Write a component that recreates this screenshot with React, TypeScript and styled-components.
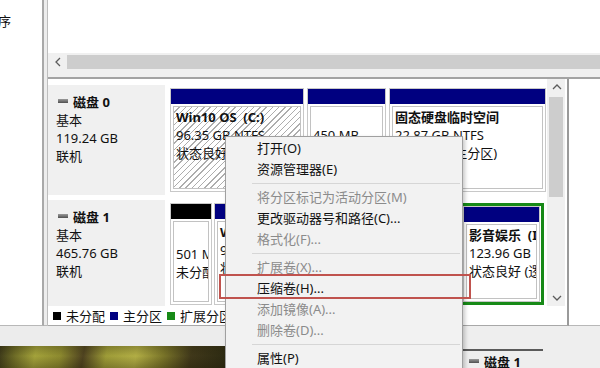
import React from 'react'
import styled, { createGlobalStyle } from 'styled-components'

const FONT = `'Noto Sans', 'Noto Sans CJK SC', sans-serif`
const NAVY = '#000080'
const GREEN = '#178a17'

const GlobalStyle = createGlobalStyle`
  *, *::before, *::after { box-sizing: border-box; }
  html, body { margin: 0; padding: 0; background: #ffffff; }
`

const Screen = styled.div`
  position: relative;
  width: 600px;
  height: 368px;
  overflow: hidden;
  display: flex;
  flex-direction: column;
  background: #eeeeee;
  font-family: ${FONT};
  font-size: 13px;
  color: #111;
`

const Upper = styled.div`
  display: flex;
  height: 326px;
  flex: none;
`

const LeftStrip = styled.div`
  width: 44px;
  background: #fff;
  border-right: 2px solid #a9a9a9;
  border-bottom: 1px solid #b8b8b8;
  padding-top: 12px;
  line-height: 18px;
  overflow: hidden;
  white-space: nowrap;

  span {
    margin-left: -2px;
  }
`

const Gutter = styled.div`
  width: 3px;
  background: #ededed;
  border-bottom: 1px solid #b8b8b8;
`

const Main = styled.div`
  flex: 1;
  display: flex;
  flex-direction: column;
  border-left: 1px solid #bdbdbd;
`

const ListArea = styled.div`
  height: 53px;
  background: #fff;
`

const HScroll = styled.div`
  height: 18px;
  display: flex;
  background: #f0f0f0;
`

const ScrollBtn = styled.div<{ $h?: number }>`
  flex: none;
  width: ${(p) => (p.$h ? 19 : 18)}px;
  height: ${(p) => p.$h ?? 18}px;
  display: flex;
  align-items: center;
  justify-content: center;
`

const HThumb = styled.div`
  flex: 1;
  margin: 2px 0;
  background: #cdcdcd;
`

const Splitter = styled.div`
  height: 8px;
  background: #f0f0f0;
  border-bottom: 2px solid #a3a3a3;
`

const Lower = styled.div`
  flex: 1;
  display: flex;
`

const DiskBox = styled.div`
  width: 521px;
  display: flex;
  flex-direction: column;
  background: #fff;
  border-right: 2px solid #9a9a9a;
  border-bottom: 1px solid #a8a8a8;
`

const Fill = styled.div`
  flex: 1;
  background: #fff;
  border-bottom: 1px solid #b8b8b8;
`

const DiskRegion = styled.div`
  height: 227px;
  display: flex;
  padding-right: 2px;
`

const DiskView = styled.div`
  flex: 1;
  display: flex;
  flex-direction: column;
  gap: 5px;
  padding-top: 6px;
`

const DiskRow = styled.div<{ $h: number }>`
  height: ${(p) => p.$h}px;
  display: flex;
  gap: 5px;
`

const DiskLabel = styled.div`
  width: 117px;
  flex: none;
  background: #f0f0f0;
  padding: 8px 8px;
  line-height: 18px;
  white-space: nowrap;

  b {
    font-weight: 700;
  }
`

const DiskIcon = styled.span`
  display: inline-block;
  width: 10px;
  height: 4px;
  margin: 0 5px 0 2px;
  vertical-align: 4px;
  background: linear-gradient(#9a9a9a, #4f4f4f);
`

const Partitions = styled.div<{ $gap: number; $padB: number }>`
  display: flex;
  gap: ${(p) => p.$gap}px;
  padding: 3px 0 ${(p) => p.$padB}px;
`

const PartitionBox = styled.div<{ $w: number }>`
  width: ${(p) => p.$w}px;
  flex: none;
  display: flex;
  flex-direction: column;
  background: #fff;
  border: 1px solid #c8c8c8;
`

const Bar = styled.div<{ $c: string }>`
  height: 15px;
  flex: none;
  background: ${(p) => p.$c};
`

const PartBody = styled.div<{ $hatch?: boolean; $top: number }>`
  flex: 1;
  margin: 2px;
  border: 1px solid #c2c2c2;
  padding: ${(p) => p.$top}px 2px 0;
  line-height: 18px;
  white-space: pre;
  overflow: hidden;
  background: ${(p) =>
    p.$hatch
      ? 'repeating-linear-gradient(135deg, #ffffff 0 3.4px, #adadad 3.4px 4.4px)'
      : '#fff'};

  b {
    font-weight: 700;
  }
`

const Extended = styled.div`
  display: flex;
  gap: 3px;
  border: 3px solid ${GREEN};
  padding-right: 1px;
`

const VScroll = styled.div`
  width: 18px;
  flex: none;
  display: flex;
  flex-direction: column;
  background: #f0f0f0;
`

const VThumb = styled.div`
  height: 100px;
  margin: 2px 2px 0;
  background: #cdcdcd;
`

const VTrack = styled.div`
  flex: 1;
`

const Legend = styled.div`
  height: 19px;
  display: flex;
  align-items: center;
  gap: 5px;
  padding-left: 5px;
  white-space: nowrap;
`

const Swatch = styled.span<{ $c: string }>`
  width: 8px;
  height: 8px;
  background: ${(p) => p.$c};
`

const Bottom = styled.div`
  flex: 1;
  display: flex;
  border-bottom: 2px solid #222;
`

const BottomLeft = styled.div`
  width: 225px;
  display: flex;
  flex-direction: column;
`

const GreyBand = styled.div`
  height: 20px;
  background: #ececec;
`

const Photo = styled.div`
  flex: 1;
  background:
    linear-gradient(180deg, rgba(40, 35, 10, 0.25), rgba(0, 0, 0, 0) 40%, rgba(30, 25, 5, 0.35)),
    linear-gradient(
      100deg,
      #3b3819 0%,
      #6d6b26 7%,
      #a4a33b 16%,
      #8d8a2f 27%,
      #4f4320 37%,
      #9e9c38 47%,
      #b2ae45 60%,
      #7a7529 72%,
      #40381a 84%,
      #2c2a12 100%
    );
`

const BackPanel = styled.div`
  margin-left: auto;
  width: 137px;
  padding: 23px 0 0 4px;
  overflow: hidden;
  white-space: nowrap;
  line-height: 18px;

  b {
    font-weight: 700;
  }
`

const BackRule = styled.div`
  width: 80px;
  height: 2px;
  margin-left: -4px;
  margin-bottom: 2px;
  background: #5a5a5a;
`

const Menu = styled.div`
  position: absolute;
  left: 225px;
  top: 136px;
  width: 238px;
  height: 250px;
  padding: 1px 0;
  background: #f2f2f2;
  border: 1px solid #a0a0a0;
  box-shadow: 2px 2px 4px rgba(0, 0, 0, 0.22);
`

const MenuItem = styled.div<{ $disabled?: boolean }>`
  height: 21px;
  line-height: 21px;
  padding-left: 31px;
  white-space: nowrap;
  color: ${(p) => (p.$disabled ? '#8b8b8b' : '#111')};
`

const MenuSep = styled.div`
  height: 1px;
  margin: 3px 2px 3px 26px;
  background: #d6d6d6;
`

const Highlight = styled.div`
  position: absolute;
  left: 219px;
  top: 274px;
  width: 252px;
  height: 25px;
  border: 2px solid #c0534e;
`

function Chevron({ dir }: { dir: 'up' | 'down' | 'left' }) {
  const pts = dir === 'up' ? '1,6 5,2 9,6' : dir === 'down' ? '1,2 5,6 9,2' : '6,1 2,5 6,9'
  const w = dir === 'left' ? 8 : 10
  const h = dir === 'left' ? 10 : 8
  return (
    <svg width={w} height={h} viewBox={`0 0 ${w} ${h}`}>
      <polyline points={pts} fill="none" stroke="#5c5c5c" strokeWidth="1.3" />
    </svg>
  )
}

type Part = {
  width: number
  bar: string
  lines: string[]
  bold?: boolean
  hatch?: boolean
  top?: number
}

function Partition({ part }: { part: Part }) {
  return (
    <PartitionBox $w={part.width}>
      <Bar $c={part.bar} />
      <PartBody $hatch={part.hatch} $top={part.top ?? 1}>
        {part.lines.map((line, i) => (
          <div key={i}>{i === 0 && part.bold ? <b>{line}</b> : line || '\u00a0'}</div>
        ))}
      </PartBody>
    </PartitionBox>
  )
}

const disk0: Part[] = [
  {
    width: 134,
    bar: NAVY,
    bold: true,
    hatch: true,
    lines: ['Win10 OS  (C:)', '96.35 GB NTFS', '状态良好 (启动, 页面文件, 故障转储, 主分区)'],
  },
  { width: 79, bar: NAVY, lines: ['', '450 MB', '状态良好 (恢复分区)'] },
  { width: 157, bar: NAVY, bold: true, lines: ['固态硬盘临时空间', '22.87 GB NTFS', '状态良好 (主分区)'] },
]

const unallocated: Part = { width: 42, bar: '#000', top: 23, lines: ['501 MB', '未分配'] }
const disk1Primary: Part = {
  width: 116,
  bar: NAVY,
  bold: true,
  lines: ['Win7 (D:)', '97.66 GB NTFS', '状态良好 (主分区)'],
}
const logicals: Part[] = [
  { width: 125, bar: NAVY, bold: true, lines: ['软件 (E:)', '120.00 GB NTFS', '状态良好 (逻辑驱动器)'] },
  { width: 77, bar: NAVY, bold: true, lines: ['影音娱乐  (I:)', '123.96 GB', '状态良好 (逻辑驱动器)'] },
]

type MenuEntry = { label: string; disabled?: boolean } | 'sep'

const menu: MenuEntry[] = [
  { label: '打开(O)' },
  { label: '资源管理器(E)' },
  'sep',
  { label: '将分区标记为活动分区(M)', disabled: true },
  { label: '更改驱动器号和路径(C)...' },
  { label: '格式化(F)...', disabled: true },
  'sep',
  { label: '扩展卷(X)...', disabled: true },
  { label: '压缩卷(H)...' },
  { label: '添加镜像(A)...', disabled: true },
  { label: '删除卷(D)...', disabled: true },
  'sep',
  { label: '属性(P)' },
]

function DiskInfo({ name, size }: { name: string; size: string }) {
  return (
    <DiskLabel>
      <div>
        <DiskIcon />
        <b>{name}</b>
      </div>
      <div>基本</div>
      <div>{size}</div>
      <div>联机</div>
    </DiskLabel>
  )
}

export default function App() {
  return (
    <>
      <GlobalStyle />
      <Screen>
        <Upper>
          <LeftStrip>
            <span>序</span>
          </LeftStrip>
          <Gutter />
          <Main>
            <ListArea />
            <HScroll>
              <ScrollBtn $h={18}>
                <Chevron dir="left" />
              </ScrollBtn>
              <HThumb />
            </HScroll>
            <Splitter />
            <Lower>
              <DiskBox>
                <DiskRegion>
                  <DiskView>
                    <DiskRow $h={110}>
                      <DiskInfo name="磁盘 0" size="119.24 GB" />
                      <Partitions $gap={3} $padB={3}>
                        {disk0.map((p, i) => (
                          <Partition key={i} part={p} />
                        ))}
                      </Partitions>
                    </DiskRow>
                    <DiskRow $h={106}>
                      <DiskInfo name="磁盘 1" size="465.76 GB" />
                      <Partitions $gap={2} $padB={1}>
                        <Partition part={unallocated} />
                        <Partition part={disk1Primary} />
                        <Extended>
                          {logicals.map((p, i) => (
                            <Partition key={i} part={p} />
                          ))}
                        </Extended>
                      </Partitions>
                    </DiskRow>
                  </DiskView>
                  <VScroll>
                    <ScrollBtn $h={16}>
                      <Chevron dir="up" />
                    </ScrollBtn>
                    <VThumb />
                    <VTrack />
                    <ScrollBtn $h={16}>
                      <Chevron dir="down" />
                    </ScrollBtn>
                  </VScroll>
                </DiskRegion>
                <Legend>
                  <Swatch $c="#000" />
                  <span>未分配</span>
                  <Swatch $c={NAVY} />
                  <span>主分区</span>
                  <Swatch $c={GREEN} />
                  <span>扩展分区</span>
                  <Swatch $c="#3aa63a" />
                  <span>可用空间</span>
                </Legend>
              </DiskBox>
              <Fill />
            </Lower>
          </Main>
        </Upper>
        <Bottom>
          <BottomLeft>
            <GreyBand />
            <Photo />
          </BottomLeft>
          <BackPanel>
            <BackRule />
            <DiskIcon />
            <b>磁盘 1</b>
          </BackPanel>
        </Bottom>

        <Menu>
          {menu.map((m, i) =>
            m === 'sep' ? (
              <MenuSep key={i} />
            ) : (
              <MenuItem key={i} $disabled={m.disabled}>
                {m.label}
              </MenuItem>
            )
          )}
        </Menu>
        <Highlight />
      </Screen>
    </>
  )
}
